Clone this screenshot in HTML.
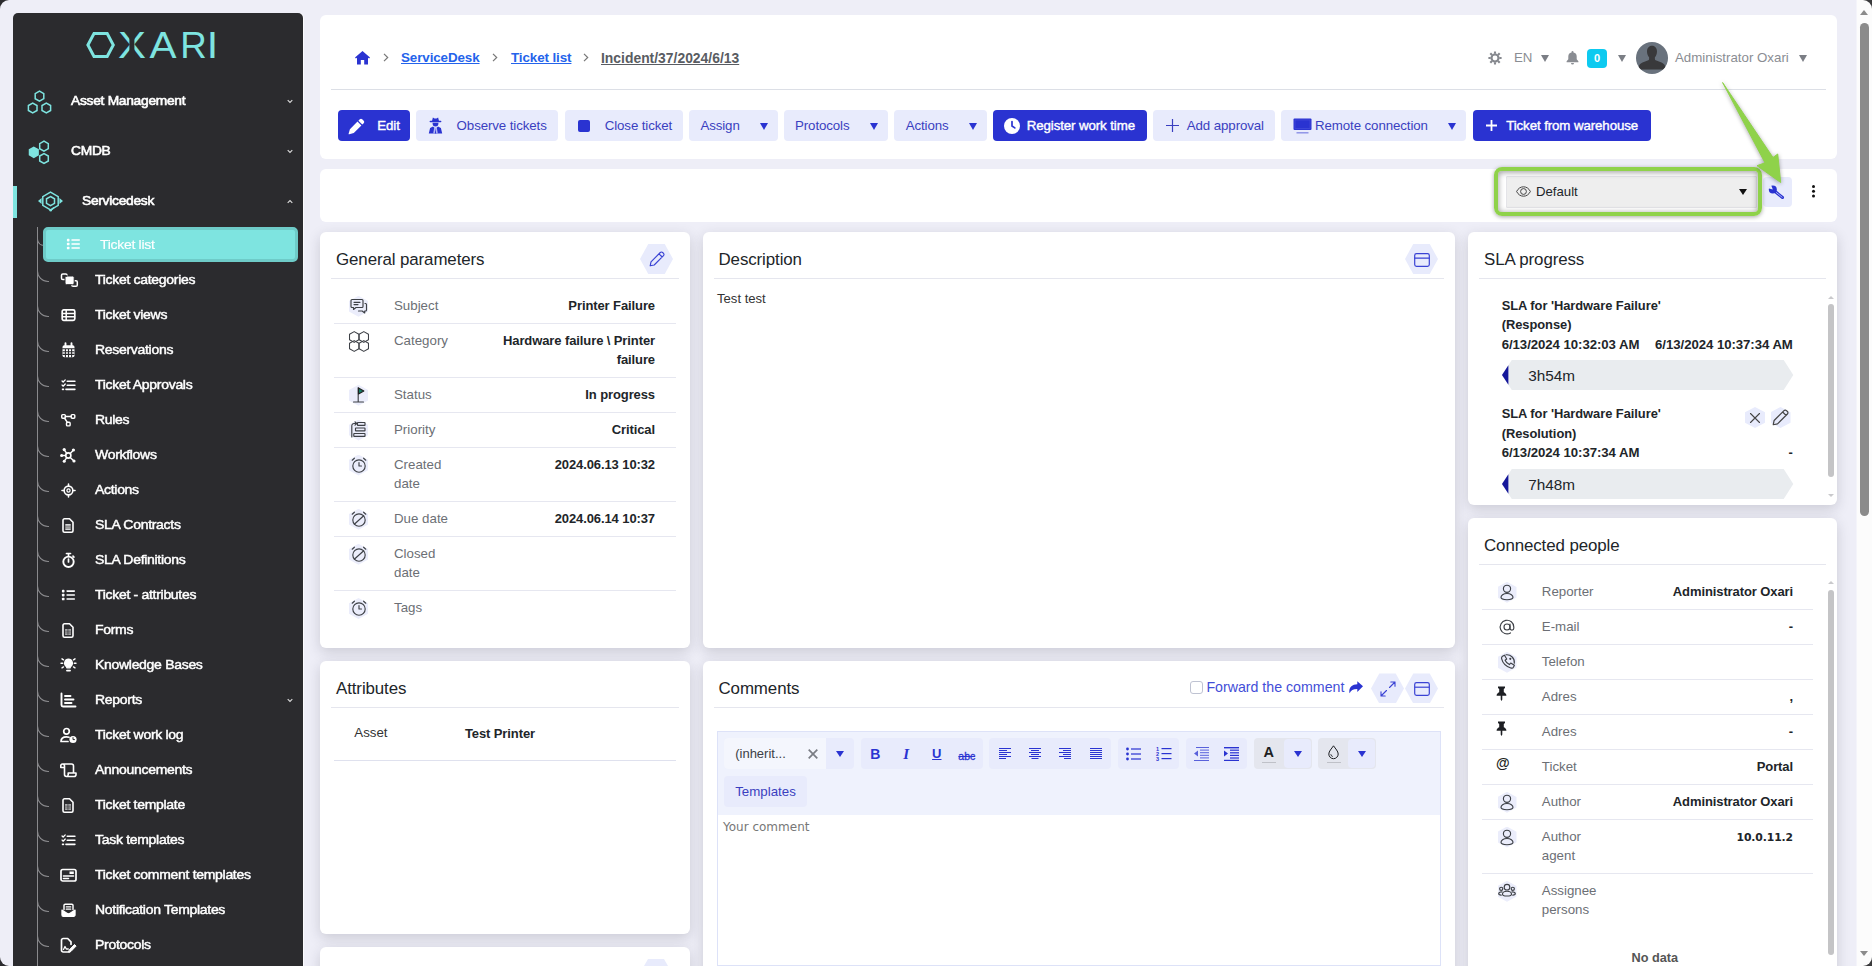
<!DOCTYPE html>
<html lang="en">
<head>
<meta charset="utf-8">
<title>Incident/37/2024/6/13</title>
<style>
*{box-sizing:border-box;margin:0;padding:0}
html,body{width:1872px;height:966px;overflow:hidden}
body{background:#eeeef7;font-family:"Liberation Sans",sans-serif;font-size:13px;color:#212529;position:relative}
.abs{position:absolute}
svg{display:block;overflow:visible}
/* window corners */
.corner{position:absolute;width:9px;height:9px;background:#2b2b2e;overflow:hidden}
.corner i{position:absolute;width:20px;height:20px;border-radius:9px;background:#eeeef7}
/* sidebar */
#side{position:absolute;left:13px;top:13px;width:290px;height:960px;background:#2b2b2e;border-radius:5px 5px 0 0;box-shadow:1px 0 0 #fbfbfd}
.mi{position:absolute;left:0;width:290px;height:20px;color:#fff;font-size:13px;line-height:20px;letter-spacing:-0.26px;-webkit-text-stroke:0.6px #fff;margin-top:1px}
.mi span{position:absolute;white-space:nowrap;transform:scaleX(1.06);transform-origin:0 50%}
.sub{position:absolute;left:0;width:290px;height:20px;color:#fff;font-size:13px;line-height:20px;letter-spacing:-0.28px;-webkit-text-stroke:0.45px #fff;margin-top:1px}
.sub span{position:absolute;left:81.500px;top:0;white-space:nowrap;transform:scaleX(1.077);transform-origin:0 50%}
.sub svg{position:absolute;left:46.700px;top:2px}
.chev,.sub svg.chev{position:absolute;left:auto;right:10px;top:8px}
.twig{position:absolute;left:24px;width:12px;height:12px;border-left:1px solid #8a8a8d;border-bottom:1px solid #8a8a8d;border-radius:0 0 0 11px}
/* cards */
.card{position:absolute;background:#fff;border-radius:6px;box-shadow:0 4px 13px rgba(40,42,55,.175)}
.ct{position:absolute;left:16px;top:18px;line-height:20px;font-size:16.900px;color:#212529;letter-spacing:-0.1px;white-space:nowrap}
.chr{position:absolute;left:12px;right:12px;top:45px;height:1px;background:#e5e6ee}
.hex{position:absolute;width:32px;height:28px;background:#e8ebfc;clip-path:polygon(25% 0,75% 0,100% 50%,75% 100%,25% 100%,0 50%)}
.hexv{position:absolute;width:19px;height:21px;background:#ebedfb;clip-path:polygon(50% 0,100% 25%,100% 75%,50% 100%,0 75%,0 25%)}
.row{position:absolute;left:14px;right:14px;border-bottom:1px solid #e3e4ee}
.lbl{position:absolute;color:#6c6f75;font-size:13.3px;line-height:19px;white-space:nowrap}
.val{position:absolute;color:#212529;font-weight:bold;font-size:13px;line-height:19px;text-align:right;white-space:nowrap;letter-spacing:-0.1px}
.bc{font-weight:bold;font-size:13.4px;line-height:20px;text-decoration:underline;white-space:nowrap;letter-spacing:-0.1px;margin-top:1px}
.tn{font-size:13.3px;line-height:20px;color:#8a8d93;white-space:nowrap;margin-top:1px}
.sb{-webkit-text-stroke:0.4px #fff}
.slab{font-weight:bold;font-size:12.900px;line-height:20px;color:#212529;white-space:nowrap;letter-spacing:-.05px}
.tb{width:20px;text-align:center;font-size:14px;line-height:20px;color:#2a33d1}
/* buttons */
.btn{position:absolute;top:110px;height:31px;border-radius:4px;font-size:13.3px;line-height:31px;white-space:nowrap;letter-spacing:-0.1px}
.bp{background:#2a33d1;color:#fff}
.bl{background:#e8ebfc;color:#3a3fc0}
.btn span{position:absolute;top:0}
.tri{position:absolute;width:0;height:0;border-left:4.5px solid transparent;border-right:4.5px solid transparent;border-top:7px solid #2a33d1}
.trig{position:absolute;width:0;height:0;border-left:4.5px solid transparent;border-right:4.5px solid transparent;border-top:7px solid #7b7e85}
</style>
</head>
<body>
<!-- window corners -->
<div class="corner" style="left:0;top:0"><i style="left:0;top:0"></i></div>
<div class="corner" style="left:0;bottom:0"><i style="left:0;bottom:0"></i></div>

<!-- SIDEBAR -->
<div id="side">
<svg class="abs" style="left:73px;top:19px" width="130" height="27" viewBox="0 0 130 27" role="img" aria-label="OXARI"><title>OXARI</title>
<polygon points="1.900,13 8,1.500 21.200,1.500 27.300,13 21.200,24.400 8,24.400" fill="none" stroke="#7ee4e0" stroke-width="3"/>
<g font-family="Liberation Sans, sans-serif" font-size="37.500" fill="#7ee4e0" text-anchor="middle"><text transform="translate(45.900,25.900) scale(1.120,1)">X</text><text transform="translate(77,25.900) scale(1.080,1)">A</text><text transform="translate(107.600,25.900) scale(.98,1)">R</text><text transform="translate(126.500,25.900) scale(1.100,1)">I</text></g><rect x="43.400" y="-1" width="5" height="29" fill="#2b2b2e"/></svg>
<div class="mi" style="top:77px"><svg class="abs" style="left:14px;top:-1.500px" width="25" height="25" viewBox="0 0 25 25" fill="none" stroke="#7ee4e0" stroke-width="1.500"><polygon points="16.8,8.7 12.5,11.2 8.2,8.7 8.2,3.7 12.5,1.2 16.8,3.7"/><polygon points="10.0,20.5 5.7,23.0 1.4,20.5 1.4,15.5 5.7,13.0 10.0,15.5"/><polygon points="23.6,20.5 19.3,23.0 15.0,20.5 15.0,15.5 19.3,13.0 23.6,15.5"/></svg><span style="left:58px">Asset Management</span><svg class="chev" width="6" height="5" viewBox="0 0 6 5" fill="none" stroke="#ddd" stroke-width="1.100"><path d="M0.700 1.200l2.300 2.300 2.300-2.300"/></svg></div>
<div class="mi" style="top:127px"><svg class="abs" style="left:15px;top:-1.500px" width="23" height="25" viewBox="0 0 23 25" fill="none" stroke="#7ee4e0" stroke-width="1.500"><polygon points="20.3,8.7 16.0,11.2 11.7,8.7 11.7,3.7 16.0,1.2 20.3,3.7"/><polygon points="20.3,21.0 16.0,23.5 11.7,21.0 11.7,16.0 16.0,13.5 20.3,16.0"/><polygon points="10.1,14.8 5.8,17.3 1.5,14.8 1.5,9.8 5.8,7.3 10.1,9.8" fill="#7ee4e0"/></svg><span style="left:58px">CMDB</span><svg class="chev" width="6" height="5" viewBox="0 0 6 5" fill="none" stroke="#ddd" stroke-width="1.100"><path d="M0.700 1.200l2.300 2.300 2.300-2.300"/></svg></div>
<div class="abs" style="left:0;top:173px;width:4px;height:32px;background:#7ee4e0"></div>
<div class="mi" style="top:177px"><svg class="abs" style="left:24.500px;top:0px" width="25" height="21" viewBox="0 0 25 21" fill="none" stroke="#7ee4e0" stroke-width="1.500"><polygon points="12.5,1.200 20.200,5.600 20.200,14.400 12.5,18.800 4.800,14.400 4.800,5.600"/><polygon points="12.5,5.500 16.500,7.800 16.500,12.300 12.5,14.600 8.500,12.300 8.500,7.800"/><path d="M3.600 7L0 10l3.600 3zM21.400 7L25 10l-3.600 3z" fill="#7ee4e0" stroke="none"/><path d="M16 16.500l-3 2.800" /><circle cx="12.700" cy="19.200" r="1.300" fill="#7ee4e0" stroke="none"/></svg><span style="left:69px">Servicedesk</span><svg class="chev" width="6" height="5" viewBox="0 0 6 5" fill="none" stroke="#ddd" stroke-width="1.100"><path d="M0.700 3.800l2.300-2.300 2.300 2.300"/></svg></div>
<div class="abs" style="left:24px;top:214px;width:1px;height:760px;background:#8a8a8d"></div>
<div class="twig" style="top:221px;width:7px"></div>
<div class="abs" style="left:30px;top:214px;width:255px;height:35px;background:#7ee4e0;border:3px solid #6ecbc8;border-radius:5px"></div>
<div class="sub" style="top:221px;-webkit-text-stroke:0.15px #fff"><svg style="left:53px;top:2px" width="14" height="14" viewBox="0 0 16 16"><g fill="#fff" stroke="none"><rect x="1" y="2" width="3" height="3" rx="1"/><rect x="1" y="6.5" width="3" height="3" rx="1"/><rect x="1" y="11" width="3" height="3" rx="1"/><rect x="6" y="2.6" width="10" height="1.8" rx=".9"/><rect x="6" y="7.1" width="10" height="1.8" rx=".9"/><rect x="6" y="11.6" width="10" height="1.8" rx=".9"/></g></svg><span style="left:87px">Ticket list</span></div>
<div class="twig" style="top:257px"></div>
<div class="sub" style="top:256px"><svg width="17" height="17" viewBox="0 0 17 17" fill="none" stroke="#fff" stroke-width="1.6" stroke-linecap="round" stroke-linejoin="round"><rect x="1.500" y="2" width="5.500" height="5.500" rx="1.300" stroke-width="1.500"/><rect x="11.800" y="8.800" width="5.500" height="5.500" rx="1.300" stroke-width="1.500"/><rect x="5" y="4" width="9.200" height="8.700" rx="1.600" fill="#fff" stroke="#2b2b2e" stroke-width="1"/></svg><span>Ticket categories</span></div>
<div class="twig" style="top:292px"></div>
<div class="sub" style="top:291px"><svg width="17" height="17" viewBox="0 0 17 17" fill="none" stroke="#fff" stroke-width="1.6" stroke-linecap="round" stroke-linejoin="round"><rect x="2.200" y="2.800" width="12.600" height="10.600" rx="1.600" stroke-width="1.700"/><path d="M2.500 6.400h12M2.500 9.800h12M6.200 3v10" stroke-width="1.500"/></svg><span>Ticket views</span></div>
<div class="twig" style="top:327px"></div>
<div class="sub" style="top:326px"><svg width="17" height="17" viewBox="0 0 17 17" fill="none" stroke="#fff" stroke-width="1.6" stroke-linecap="round" stroke-linejoin="round"><rect x="2.500" y="3.200" width="12" height="12" rx="1.8" fill="#fff" stroke="none"/><path d="M5.500 1.200v3M11.500 1.200v3" stroke-width="1.900"/><g stroke="#2b2b2e" stroke-width="1.100"><path d="M2.500 6.800h12M5.400 7v8M8.500 7v8M11.600 7v8M3 9.700h11M3 12.400h11"/></g></svg><span>Reservations</span></div>
<div class="twig" style="top:362px"></div>
<div class="sub" style="top:361px"><svg width="17" height="17" viewBox="0 0 17 17" fill="none" stroke="#fff" stroke-width="1.6" stroke-linecap="round" stroke-linejoin="round"><g transform="translate(8.500 8.500) scale(0.86) translate(-8.500 -8.500)"><path d="M1 3.200l1.300 1.300L4.700 2" stroke-width="1.500"/><path d="M1 8l1.300 1.300L4.700 6.800" stroke-width="1.500"/><path d="M7 3.500h9M7 8.300h9M5.500 13h10.500M1.500 13h1.200" stroke-width="1.800"/></g></svg><span>Ticket Approvals</span></div>
<div class="twig" style="top:397px"></div>
<div class="sub" style="top:396px"><svg width="17" height="17" viewBox="0 0 17 17" fill="none" stroke="#fff" stroke-width="1.6" stroke-linecap="round" stroke-linejoin="round"><g transform="translate(8.500 8.500) scale(0.9) translate(-8.500 -8.500)"><rect x="1" y="2" width="4" height="4" rx="1"/><rect x="11.500" y="2" width="4" height="4" rx="1"/><rect x="6.300" y="10.500" width="4" height="4" rx="1"/><path d="M5 4h6.500M4.200 6l3 4.500"/></g></svg><span>Rules</span></div>
<div class="twig" style="top:432px"></div>
<div class="sub" style="top:431px"><svg width="17" height="17" viewBox="0 0 17 17" fill="none" stroke="#fff" stroke-width="1.6" stroke-linecap="round" stroke-linejoin="round"><circle cx="8.300" cy="8.500" r="2.600"/><g fill="#fff" stroke="none"><circle cx="1.700" cy="8.500" r="1.600"/><circle cx="4.200" cy="2.600" r="1.600"/><circle cx="13.400" cy="3" r="1.600"/><circle cx="14" cy="14" r="1.600"/><circle cx="4.200" cy="14.200" r="1.500"/></g><path d="M3 8.500h2.700M4.800 3.600l2 2.800M12.600 4l-2.400 2.500M13.200 13.200l-3-2.800M4.800 13.400l2-2.700" stroke-width="1.400"/></svg><span>Workflows</span></div>
<div class="twig" style="top:467px"></div>
<div class="sub" style="top:466px"><svg width="17" height="17" viewBox="0 0 17 17" fill="none" stroke="#fff" stroke-width="1.6" stroke-linecap="round" stroke-linejoin="round"><g transform="translate(8.500 8.500) scale(0.87) translate(-8.500 -8.500)"><circle cx="8.500" cy="8.500" r="5" stroke-width="1.800"/><circle cx="8.500" cy="8.500" r="1.800" stroke-width="1.500"/><path d="M8.500 1v2.500M8.500 13.500V16M1 8.500h2.500M13.500 8.500H16" stroke-width="1.800"/></g></svg><span>Actions</span></div>
<div class="twig" style="top:502px"></div>
<div class="sub" style="top:501px"><svg width="17" height="17" viewBox="0 0 17 17" fill="none" stroke="#fff" stroke-width="1.6" stroke-linecap="round" stroke-linejoin="round"><path d="M4.500 1.800h5l3.500 3.500v8.400a1.500 1.500 0 0 1-1.500 1.500h-7A1.500 1.500 0 0 1 3 13.700V3.300a1.500 1.500 0 0 1 1.500-1.500z" /><rect x="5.300" y="7.200" width="5.400" height="5.600" fill="#fff" stroke="none"/><path d="M5.500 9.100h5M5.500 11h5" stroke="#2b2b2e" stroke-width=".9"/></svg><span>SLA Contracts</span></div>
<div class="twig" style="top:537px"></div>
<div class="sub" style="top:536px"><svg width="17" height="17" viewBox="0 0 17 17" fill="none" stroke="#fff" stroke-width="1.6" stroke-linecap="round" stroke-linejoin="round"><circle cx="8.500" cy="9.800" r="5.200" stroke-width="1.900"/><path d="M8.500 7v3M6.500 1.500h4M8.500 1.500v3M13 4.200l.9.900" stroke-width="1.700"/></svg><span>SLA Definitions</span></div>
<div class="twig" style="top:572px"></div>
<div class="sub" style="top:571px"><svg width="17" height="17" viewBox="0 0 17 17" fill="none" stroke="#fff" stroke-width="1.6" stroke-linecap="round" stroke-linejoin="round"><g transform="translate(8.500 8.500) scale(0.88) translate(-8.500 -8.500)"><g fill="#fff" stroke="none"><rect x="1" y="2" width="3" height="3" rx="1"/><rect x="1" y="6.5" width="3" height="3" rx="1"/><rect x="1" y="11" width="3" height="3" rx="1"/><rect x="6" y="2.6" width="10" height="1.8" rx=".9"/><rect x="6" y="7.1" width="10" height="1.8" rx=".9"/><rect x="6" y="11.6" width="10" height="1.8" rx=".9"/></g></g></svg><span>Ticket - attributes</span></div>
<div class="twig" style="top:607px"></div>
<div class="sub" style="top:606px"><svg width="17" height="17" viewBox="0 0 17 17" fill="none" stroke="#fff" stroke-width="1.6" stroke-linecap="round" stroke-linejoin="round"><path d="M4.500 1.800h5l3.500 3.500v8.400a1.500 1.500 0 0 1-1.500 1.500h-7A1.500 1.500 0 0 1 3 13.700V3.300a1.500 1.500 0 0 1 1.500-1.500z"/><rect x="5.300" y="7.200" width="5.400" height="5.600" fill="#fff" stroke="none"/><path d="M5.500 9.100h5M5.500 11h5M7.200 7.400v5.200M8.900 7.400v5.200" stroke="#2b2b2e" stroke-width=".8"/></svg><span>Forms</span></div>
<div class="twig" style="top:642px"></div>
<div class="sub" style="top:641px"><svg width="17" height="17" viewBox="0 0 17 17" fill="none" stroke="#fff" stroke-width="1.6" stroke-linecap="round" stroke-linejoin="round"><path d="M8.500 2.200a4 4 0 0 0-2.300 7.200c.4.400.6.900.6 1.400h3.400c0-.5.200-1 .6-1.400a4 4 0 0 0-2.300-7.200z" fill="#fff" stroke-width="1.200"/><path d="M7 13.600h3" stroke-width="1.900"/><path d="M1 6.300h1.700M14.300 6.300H16M2 1.800l1.500 1M15 1.800l-1.500 1M2 10.800l1.500-.9M15 10.800l-1.500-.9" stroke-width="1.400"/></svg><span>Knowledge Bases</span></div>
<div class="twig" style="top:677px"></div>
<div class="sub" style="top:676px"><svg width="17" height="17" viewBox="0 0 17 17" fill="none" stroke="#fff" stroke-width="1.6" stroke-linecap="round" stroke-linejoin="round"><path d="M1.500 1.500v11.500a1.500 1.500 0 0 0 1.500 1.500h12.500" stroke-width="1.900"/><path d="M5 4h5.500M5 7.500h8.500M5 11h6.500" stroke-width="1.900"/></svg><span>Reports</span><svg class="chev" width="6" height="5" viewBox="0 0 6 5" fill="none" stroke="#ddd" stroke-width="1.100"><path d="M0.700 1.200l2.300 2.300 2.300-2.300"/></svg></div>
<div class="twig" style="top:712px"></div>
<div class="sub" style="top:711px"><svg width="17" height="17" viewBox="0 0 17 17" fill="none" stroke="#fff" stroke-width="1.6" stroke-linecap="round" stroke-linejoin="round"><circle cx="6.500" cy="4.300" r="2.800" stroke-width="1.700"/><path d="M1 14.500c0-3 2.300-4.700 5.500-4.700 1 0 1.800.2 2.500.500M1 14.500h7" stroke-width="1.700"/><circle cx="13" cy="12.500" r="3.600" fill="#fff" stroke="none"/><path d="M13 10.600v2h1.500" stroke="#2b2b2e" stroke-width="1"/></svg><span>Ticket work log</span></div>
<div class="twig" style="top:747px"></div>
<div class="sub" style="top:746px"><svg width="17" height="17" viewBox="0 0 17 17" fill="none" stroke="#fff" stroke-width="1.6" stroke-linecap="round" stroke-linejoin="round"><path d="M4.500 8V4a2 2 0 0 0-2-2 1.800 1.800 0 0 0-1.700 2.300v1.200h3.200M2.500 2h9a2 2 0 0 1 2 2v6.500M6.500 14.500h7.700a1.800 1.800 0 0 0 1.800-2v-1.500H8.200v1.800a1.800 1.800 0 0 1-1.800 1.700 1.900 1.900 0 0 1-1.900-1.900V7" stroke-width="1.600"/></svg><span>Announcements</span></div>
<div class="twig" style="top:782px"></div>
<div class="sub" style="top:781px"><svg width="17" height="17" viewBox="0 0 17 17" fill="none" stroke="#fff" stroke-width="1.6" stroke-linecap="round" stroke-linejoin="round"><path d="M4.500 1.800h5l3.500 3.500v8.400a1.500 1.500 0 0 1-1.500 1.500h-7A1.500 1.500 0 0 1 3 13.700V3.300a1.500 1.500 0 0 1 1.500-1.500z"/><rect x="5.300" y="7.200" width="5.400" height="5.600" fill="#fff" stroke="none"/><path d="M5.500 9.100h5M5.500 11h5M7.200 7.400v5.200M8.900 7.400v5.200" stroke="#2b2b2e" stroke-width=".8"/></svg><span>Ticket template</span></div>
<div class="twig" style="top:817px"></div>
<div class="sub" style="top:816px"><svg width="17" height="17" viewBox="0 0 17 17" fill="none" stroke="#fff" stroke-width="1.6" stroke-linecap="round" stroke-linejoin="round"><g transform="translate(8.500 8.500) scale(0.86) translate(-8.500 -8.500)"><path d="M1 3.200l1.300 1.300L4.700 2" stroke-width="1.500"/><path d="M1 8l1.300 1.300L4.700 6.800" stroke-width="1.500"/><path d="M7 3.500h9M7 8.300h9M5.500 13h10.500M1.500 13h1.200" stroke-width="1.800"/></g></svg><span>Task templates</span></div>
<div class="twig" style="top:852px"></div>
<div class="sub" style="top:851px"><svg width="17" height="17" viewBox="0 0 17 17" fill="none" stroke="#fff" stroke-width="1.6" stroke-linecap="round" stroke-linejoin="round"><rect x="1" y="2.500" width="15" height="11.500" rx="1.800" stroke-width="1.700"/><path d="M3.500 9h10M3.500 11.500h5" stroke-width="1.600"/><rect x="9.500" y="4.500" width="4.300" height="2.500" fill="#fff" stroke="none"/></svg><span>Ticket comment templates</span></div>
<div class="twig" style="top:887px"></div>
<div class="sub" style="top:886px"><svg width="17" height="17" viewBox="0 0 17 17" fill="none" stroke="#fff" stroke-width="1.6" stroke-linecap="round" stroke-linejoin="round"><g transform="translate(8.500 8.500) scale(0.9) translate(-8.500 -8.500)"><path d="M1.200 8v5.500a1.500 1.500 0 0 0 1.500 1.500h11.600a1.500 1.500 0 0 0 1.500-1.500V8l-5.500 3.600a3.200 3.200 0 0 1-3.600 0z" fill="#fff" stroke-width="1.300"/><path d="M3.500 7.500V2.800A1.300 1.300 0 0 1 4.800 1.500h7.400a1.300 1.300 0 0 1 1.300 1.300v4.700" stroke-width="1.600"/><path d="M6 4.500h5M6 7h5" stroke-width="1.300"/></g></svg><span>Notification Templates</span></div>
<div class="twig" style="top:922px"></div>
<div class="sub" style="top:921px"><svg width="17" height="17" viewBox="0 0 17 17" fill="none" stroke="#fff" stroke-width="1.6" stroke-linecap="round" stroke-linejoin="round"><path d="M9.500 15H3.200A1.700 1.700 0 0 1 1.500 13.300V3.200A1.700 1.700 0 0 1 3.200 1.500h4.500l3.300 3.300v2.500" stroke-width="1.700"/><path d="M3.500 12.500l1.500-3 1.300 2.500h2" stroke-width="1.300"/><path d="M9.500 12.700l5-5.200 1.600 1.600-5 5.200-2.300.6z" fill="#fff" stroke-width="1"/></svg><span>Protocols</span></div>
</div>

<!-- HEADER CARD -->
<div class="card" id="head" style="left:320px;top:15px;width:1517px;height:144px;box-shadow:none">
<!-- breadcrumb -->
<svg class="abs" style="left:34.500px;top:36px" width="15" height="13.500" viewBox="0 0 15 13.500"><path d="M7.500 0L0 6.600l.9 1 1.100-.9V13.500h3.800V9h3.400v4.500H13V6.700l1.100.9.900-1z" fill="#2a33d1"/></svg>
<svg class="abs bc-sep" style="left:63px;top:38px" width="6" height="9" viewBox="0 0 6 9" fill="none" stroke="#777" stroke-width="1.200"><path d="M1 .8l3.700 3.700L1 8.200"/></svg>
<a class="abs bc" style="left:81px;top:32px;color:#2463eb">ServiceDesk</a>
<svg class="abs bc-sep" style="left:172px;top:38px" width="6" height="9" viewBox="0 0 6 9" fill="none" stroke="#777" stroke-width="1.200"><path d="M1 .8l3.700 3.700L1 8.200"/></svg>
<a class="abs bc" style="left:191px;top:32px;color:#2463eb">Ticket list</a>
<svg class="abs bc-sep" style="left:262.500px;top:38px" width="6" height="9" viewBox="0 0 6 9" fill="none" stroke="#777" stroke-width="1.200"><path d="M1 .8l3.700 3.700L1 8.200"/></svg>
<a class="abs bc" style="left:281px;top:32px;color:#595c62;font-size:13.900px;letter-spacing:0">Incident/37/2024/6/13</a>
<!-- right tools -->
<svg class="abs" style="left:1167.500px;top:36px" width="14" height="14" viewBox="0 0 14 14" fill="none" stroke="#85888e"><circle cx="7" cy="7" r="3.500" stroke-width="2.100"/><path d="M7 .4v2.300M7 11.300v2.300M.4 7h2.300M11.300 7h2.300M2.300 2.300l1.700 1.700M10 10l1.700 1.700M2.300 11.700L4 10M10 4l1.700-1.700" stroke-width="2.100"/></svg>
<div class="abs tn" style="left:1194px;top:32px">EN</div>
<div class="trig" style="left:1221px;top:40px"></div>
<svg class="abs" style="left:1245.500px;top:36px" width="13" height="13.500" viewBox="0 0 13 13.500"><path d="M6.500 0a1 1 0 0 0-1 1v.5A4 4 0 0 0 2.300 5.400v2.800L.6 10.300v.9h11.800v-.9l-1.700-2.100V5.400A4 4 0 0 0 7.500 1.500V1a1 1 0 0 0-1-1zM5 12a1.500 1.500 0 0 0 3 0z" fill="#8a8d93"/></svg>
<div class="abs" style="left:1267px;top:34px;width:20px;height:19px;border-radius:4px;background:#0dcaf0;color:#fff;font-weight:bold;font-size:11px;line-height:19px;text-align:center">0</div>
<div class="trig" style="left:1297.500px;top:40px"></div>
<svg class="abs" style="left:1316px;top:27px" width="32" height="32" viewBox="0 0 32 32"><defs><clipPath id="avc"><circle cx="16" cy="16" r="16"/></clipPath></defs><circle cx="16" cy="16" r="16" fill="#69727d"/><g clip-path="url(#avc)"><path d="M16 3.800c3.200 0 5 2.400 5 5.800 0 2.400-.9 4.500-2.100 5.700v1.700c0 .7.500 1.200 1.400 1.600l5.200 2c1.900.8 3 1.900 3.500 3.400l.5 3.400H2.500l.5-3.400c.5-1.500 1.600-2.600 3.500-3.400l5.200-2c.9-.4 1.400-.9 1.400-1.600v-1.700C11.900 14.100 11 12 11 9.600c0-3.400 1.800-5.800 5-5.800z" fill="#39393b"/></g></svg>
<div class="abs tn" style="left:1355px;top:32px">Administrator Oxari</div>
<div class="trig" style="left:1479px;top:40px"></div>
<div class="abs" style="left:11px;top:74px;width:1495px;height:1px;background:#dcdfe6"></div>
<div class="btn bp" style="left:18px;top:95px;width:72px"><svg class="abs" style="left:10px;top:7.500px" width="17" height="17" viewBox="0 0 17 17"><path d="M11.800 1.300a1.700 1.700 0 0 1 2.400 0l1.500 1.500a1.700 1.700 0 0 1 0 2.400l-1.400 1.400-3.900-3.900zM9.500 3.600l3.900 3.900-7.600 7.600-4.600 1.200a.5.500 0 0 1-.6-.6l1.300-4.500z" fill="#fff"/></svg><span class="sb" style="left:39.300px">Edit</span></div>
<div class="btn bl" style="left:96px;top:95px;width:142px"><svg class="abs" style="left:11.700px;top:7.300px" width="15" height="16.500" viewBox="0 0 15 16.500" fill="#2a33d1"><path d="M4 4L4.900.6 6.500 1.400h2L10.100.6 11 4z"/><rect x="1.600" y="3.800" width="11.800" height="1.400" rx=".7"/><path d="M4.600 5.800h5.800v.8A2.900 2.900 0 0 1 7.500 9.500 2.900 2.900 0 0 1 4.600 6.600z"/><path d="M.8 16.500l1.300-5.600L5 9.400l2.500 2.300L10 9.400l2.900 1.500 1.300 5.600z"/><path d="M6.200 10.600h2.600l1 5.900H5.200z" fill="#b4b9f4"/><path d="M7.500 11.500l.7 5H6.800z"/></svg><span style="left:40.600px">Observe tickets</span></div>
<div class="btn bl" style="left:245px;top:95px;width:118px"><i class="abs" style="left:12.800px;top:9.700px;width:12px;height:12px;border-radius:2px;background:#2a33d1"></i><span style="left:39.700px">Close ticket</span></div>
<div class="btn bl" style="left:369px;top:95px;width:89px"><span style="left:11.400px">Assign</span><i class="tri" style="left:70.5px;top:12.500px"></i></div>
<div class="btn bl" style="left:464px;top:95px;width:104px"><span style="left:11px">Protocols</span><i class="tri" style="left:85.5px;top:12.500px"></i></div>
<div class="btn bl" style="left:574px;top:95px;width:93px"><span style="left:11.700px">Actions</span><i class="tri" style="left:74.7px;top:12.500px"></i></div>
<div class="btn bp" style="left:673px;top:95px;width:154px"><svg class="abs" style="left:11px;top:7.500px" width="16" height="16" viewBox="0 0 16 16"><circle cx="8" cy="8" r="8" fill="#fff"/><path d="M8 3.500V8l2.800 1.900" fill="none" stroke="#2a33d1" stroke-width="1.700" stroke-linecap="round"/></svg><span class="sb" style="left:33.700px">Register work time</span></div>
<div class="btn bl" style="left:833px;top:95px;width:122px"><svg class="abs" style="left:12.500px;top:9px" width="13" height="13" viewBox="0 0 13 13" stroke="#3a3fc0" stroke-width="1.200"><path d="M6.500 0v13M0 6.500h13"/></svg><span style="left:33.800px">Add approval</span></div>
<div class="btn bl" style="left:961px;top:95px;width:185px"><svg class="abs" style="left:11.500px;top:7.500px" width="19" height="16" viewBox="0 0 19 16"><rect x="0.500" y="0.500" width="18" height="11.500" rx="1" fill="#2a33d1"/><rect x="2" y="2" width="15" height="8.500" fill="#2a33d1" stroke="#4a52dc" stroke-width=".6"/><path d="M3.500 14.800h12" stroke="#8a8fe6" stroke-width="1.400"/></svg><span style="left:34px">Remote connection</span><i class="tri" style="left:167px;top:12.500px"></i></div>
<div class="btn bp" style="left:1153px;top:95px;width:178px"><svg class="abs" style="left:12.500px;top:10px" width="11" height="11" viewBox="0 0 11 11" stroke="#fff" stroke-width="1.800"><path d="M5.500 0v11M0 5.500h11"/></svg><span class="sb" style="left:33.200px">Ticket from warehouse</span></div>

</div>

<!-- VIEW CARD -->
<div class="card" id="view" style="left:320px;top:169px;width:1517px;height:53px;box-shadow:none">
<div class="abs" style="left:1186px;top:7px;width:251px;height:32px;background:#eeeeee;border:1px solid #e4e4e8;border-radius:1px"></div>
<svg class="abs" style="left:1196px;top:17px" width="15" height="11" viewBox="0 0 15 11" fill="none" stroke="#444" stroke-width="1"><path d="M.6 5.500C2.200 2.300 4.700.8 7.500.8s5.300 1.500 6.900 4.700c-1.600 3.200-4.100 4.700-6.900 4.700S2.200 8.700.6 5.500z"/><circle cx="7.500" cy="5.500" r="2.900"/></svg>
<div class="abs" style="left:1216px;top:13px;font-size:13.200px;line-height:20px;color:#212529">Default</div>
<i class="tri" style="left:1418.500px;top:20px;border-top-color:#111;border-left-width:4.200px;border-right-width:4.200px;border-top-width:6px"></i>
<div class="abs" style="left:1443px;top:8px;width:29px;height:29.500px;border-radius:4px;background:#e8ebfc"></div>
<svg class="abs" style="left:1447px;top:14px" width="20" height="18" viewBox="0 0 20 18"><circle cx="5.800" cy="6.500" r="4" fill="#2a33d1"/><path d="M5.800 6.500L1 5.200 3.800 1.200z" fill="#e8ebfc"/><path d="M7.500 8l8 6.500" stroke="#2a33d1" stroke-width="3" stroke-linecap="round"/><path d="M9.300 9.500l5.800 4.700" stroke="#b9bef5" stroke-width=".9" stroke-linecap="round"/></svg>
<div class="abs" style="left:1491.500px;top:15.700px;width:3.300px;height:3.300px;border-radius:2px;background:#111;box-shadow:0 4.700px 0 #111,0 9.400px 0 #111"></div>

</div>

<!-- GENERAL -->
<div class="card" id="gen" style="left:320px;top:232px;width:370px;height:416px">
<div class="ct">General parameters</div>
<i class="hex" style="left:320.0px;top:12.0px;width:33px;height:30px"></i><svg class="abs" style="left:328.5px;top:19.0px" width="16" height="16" viewBox="0 0 16 16" ><path d="M11.300 1.500a1.600 1.600 0 0 1 2.300 0l.9.900a1.600 1.600 0 0 1 0 2.300L5.200 14 1.200 14.800 2 10.800zM10 2.800l3.200 3.200" fill="none" stroke="#3a43d4" stroke-width="1.150" stroke-linejoin="round"/></svg>
<div class="chr" style="top:46px;left:11px;right:11px"></div>
<div class="abs" style="left:14px;top:91px;width:342px;height:1px;background:#e6e7f0"></div>
<div class="abs" style="left:14px;top:145px;width:342px;height:1px;background:#e6e7f0"></div>
<div class="abs" style="left:14px;top:180px;width:342px;height:1px;background:#e6e7f0"></div>
<div class="abs" style="left:14px;top:215px;width:342px;height:1px;background:#e6e7f0"></div>
<div class="abs" style="left:14px;top:269px;width:342px;height:1px;background:#e6e7f0"></div>
<div class="abs" style="left:14px;top:304px;width:342px;height:1px;background:#e6e7f0"></div>
<div class="abs" style="left:14px;top:358px;width:342px;height:1px;background:#e6e7f0"></div>
<i class="hexv" style="left:29.0px;top:63.7px"></i><svg class="abs" style="left:29.5px;top:65.2px" width="18" height="18" viewBox="0 0 18 18" fill="none" stroke="#3d4046" stroke-width="1.15" stroke-linecap="round" stroke-linejoin="round"><path d="M2 2.500h10a1 1 0 0 1 1 1v6a1 1 0 0 1-1 1H6l-2.500 2v-2H2a1 1 0 0 1-1-1v-6a1 1 0 0 1 1-1z"/><path d="M4 5.300h6M4 7.600h4"/><path d="M15 6.500h.5a1 1 0 0 1 1 1v5.500a1 1 0 0 1-1 1h-.8v2l-2.500-2H8.500"/></svg>
<div class="lbl" style="left:74px;top:64.2px">Subject</div>
<div class="val" style="right:35px;top:64.2px">Printer Failure</div>
<svg class="abs" style="left:28.8px;top:98.6px" width="20" height="21" viewBox="0 0 20 21" fill="none" stroke="#3d4046" stroke-width="1.05" stroke-linecap="round" stroke-linejoin="round"><polygon points="5.20,0.60 9.88,3.30 9.88,8.70 5.20,11.40 0.52,8.70 0.52,3.30"/><polygon points="14.80,0.60 19.48,3.30 19.48,8.70 14.80,11.40 10.12,8.70 10.12,3.30"/><polygon points="5.20,9.60 9.88,12.30 9.88,17.70 5.20,20.40 0.52,17.70 0.52,12.30"/><polygon points="14.80,9.60 19.48,12.30 19.48,17.70 14.80,20.40 10.12,17.70 10.12,12.30"/></svg>
<div class="lbl" style="left:74px;top:99.3px">Category</div>
<div class="val" style="right:35px;top:99.3px">Hardware failure \ Printer<br>failure</div>
<i class="hexv" style="left:29.0px;top:152.7px"></i><svg class="abs" style="left:29.5px;top:154.2px" width="18" height="18" viewBox="0 0 18 18" fill="none" stroke="#3d4046" stroke-width="1.15" stroke-linecap="round" stroke-linejoin="round"><path d="M8.200 1.500v14M3.500 16h10" /><path d="M8.500 2l5.300 3-5.300 3z" fill="#14806a" stroke="#222"/></svg>
<div class="lbl" style="left:74px;top:153.2px">Status</div>
<div class="val" style="right:35px;top:153.2px">In progress</div>
<i class="hexv" style="left:29.0px;top:187.6px"></i><svg class="abs" style="left:29.5px;top:189.1px" width="18" height="18" viewBox="0 0 18 18" fill="none" stroke="#3d4046" stroke-width="1.15" stroke-linecap="round" stroke-linejoin="round"><path d="M6.500 2.500H4a2.200 2.200 0 0 0-2.200 2.200V16"/><path d="M5 .8l1.800 1.700L5 4.200" /><rect x="7.500" y="1.500" width="7.500" height="2.800" rx=".4"/><rect x="5.500" y="7" width="9.500" height="2.800" rx=".4"/><rect x="3.800" y="12.500" width="11.200" height="2.800" rx=".4"/></svg>
<div class="lbl" style="left:74px;top:188.1px">Priority</div>
<div class="val" style="right:35px;top:188.1px">Critical</div>
<i class="hexv" style="left:29.0px;top:222.6px"></i><svg class="abs" style="left:29.5px;top:224.1px" width="18" height="18" viewBox="0 0 18 18" fill="none" stroke="#3d4046" stroke-width="1.15" stroke-linecap="round" stroke-linejoin="round"><circle cx="9" cy="10" r="6.200"/><path d="M9 6.500V10h2.500M2.200 4.200l2.200-2M15.800 4.200l-2.200-2"/></svg>
<div class="lbl" style="left:74px;top:223.1px">Created<br>date</div>
<div class="val" style="right:35px;top:223.1px">2024.06.13 10:32</div>
<i class="hexv" style="left:29.0px;top:276.8px"></i><svg class="abs" style="left:29.5px;top:278.3px" width="18" height="18" viewBox="0 0 18 18" fill="none" stroke="#3d4046" stroke-width="1.15" stroke-linecap="round" stroke-linejoin="round"><circle cx="9" cy="10" r="6.200"/><path d="M4.300 14.200l9.400-8.400M2.200 4.200l2.200-2M15.800 4.200l-2.200-2"/></svg>
<div class="lbl" style="left:74px;top:277.3px">Due date</div>
<div class="val" style="right:35px;top:277.3px">2024.06.14 10:37</div>
<i class="hexv" style="left:29.0px;top:311.7px"></i><svg class="abs" style="left:29.5px;top:313.2px" width="18" height="18" viewBox="0 0 18 18" fill="none" stroke="#3d4046" stroke-width="1.15" stroke-linecap="round" stroke-linejoin="round"><circle cx="9" cy="10" r="6.200"/><path d="M4.300 14.200l9.400-8.400M2.200 4.200l2.200-2M15.800 4.200l-2.200-2"/></svg>
<div class="lbl" style="left:74px;top:312.2px">Closed<br>date</div>
<i class="hexv" style="left:29.0px;top:365.9px"></i><svg class="abs" style="left:29.5px;top:367.4px" width="18" height="18" viewBox="0 0 18 18" fill="none" stroke="#3d4046" stroke-width="1.15" stroke-linecap="round" stroke-linejoin="round"><circle cx="9" cy="10" r="6.200"/><path d="M9 6.500V10h2.500M2.200 4.200l2.200-2M15.800 4.200l-2.200-2"/></svg>
<div class="lbl" style="left:74px;top:366.4px">Tags</div>

</div>

<!-- DESCRIPTION -->
<div class="card" id="desc" style="left:703px;top:232px;width:752px;height:416px">
<div class="ct" style="left:15.500px">Description</div>
<i class="hex" style="left:702.0px;top:12.0px;width:33px;height:30px"></i><svg class="abs" style="left:710.5px;top:20.5px" width="16" height="14" viewBox="0 0 16 14" fill="none" stroke="#3a43d4" stroke-width="1.2" stroke-linecap="round" stroke-linejoin="round"><rect x=".7" y=".7" width="14.600" height="12.600" rx="1.800"/><path d="M.7 5.200h14.600"/></svg>
<div class="chr" style="top:46px;left:11px;right:11px"></div>
<div class="abs" style="left:14px;top:57px;font-size:13.100px;line-height:20px;color:#333">Test test</div>

</div>

<!-- SLA -->
<div class="card" id="sla" style="left:1468px;top:232px;width:369px;height:273px">
<div class="ct">SLA progress</div>
<div class="chr" style="top:46px;left:11px;right:11px"></div>
<div class="abs slab" style="left:33.7px;top:63.7px">SLA for 'Hardware Failure'</div>
<div class="abs slab" style="left:33.7px;top:82.7px">(Response)</div>
<div class="abs slab" style="font-size:13.200px;left:33.7px;top:102.7px">6/13/2024 10:32:03 AM</div>
<div class="abs slab" style="font-size:13.200px;right:44.2px;top:102.7px">6/13/2024 10:37:34 AM</div>
<svg class="abs" style="left:33.5px;top:128.0px" width="292" height="30" viewBox="0 0 292 30" ><polygon points="0,15 9.800,0 281.700,0 291.300,15 281.700,30 9.800,30" fill="#e9ecef"/><polygon points="0,15 6.400,5.200 6.400,24.800" fill="#15179a"/></svg><div class="abs" style="left:60.3px;top:133.8px;font-size:15.300px;line-height:20px;color:#212529">3h54m</div>
<div class="abs slab" style="left:33.7px;top:171.6px">SLA for 'Hardware Failure'</div>
<div class="abs slab" style="left:33.7px;top:191.6px">(Resolution)</div>
<div class="abs slab" style="font-size:13.200px;left:33.7px;top:210.9px">6/13/2024 10:37:34 AM</div>
<div class="abs slab" style="right:44.2px;top:210.9px">-</div>
<svg class="abs" style="left:33.5px;top:237.0px" width="292" height="30" viewBox="0 0 292 30" ><polygon points="0,15 9.800,0 281.700,0 291.300,15 281.700,30 9.800,30" fill="#e9ecef"/><polygon points="0,15 6.400,5.200 6.400,24.800" fill="#15179a"/></svg><div class="abs" style="left:60.3px;top:242.8px;font-size:15.300px;line-height:20px;color:#212529">7h48m</div>
<i class="hexv" style="left:277.0px;top:175.0px;width:20px;height:21px;background:#e8ebfc"></i><svg class="abs" style="left:282.0px;top:180.5px" width="10" height="10" viewBox="0 0 10 10" fill="none" stroke="#444" stroke-width="1.1" stroke-linecap="round" stroke-linejoin="round"><path d="M.5.500l9 9M9.500.500l-9 9"/></svg>
<i class="hexv" style="left:302.5px;top:175.0px;width:20px;height:21px;background:#e8ebfc"></i><svg class="abs" style="left:304.0px;top:176.8px" width="17" height="17" viewBox="0 0 16 16" ><path d="M11.300 1.500a1.600 1.600 0 0 1 2.300 0l.9.900a1.600 1.600 0 0 1 0 2.300L5.200 14 1.200 14.800 2 10.800zM10 2.800l3.200 3.200" fill="none" stroke="#444" stroke-width="1.150" stroke-linejoin="round"/></svg>
<i class="abs" style="left:360.2px;top:72px;width:6px;height:173px;border-radius:3px;background:#c4c4c6"></i>
<i class="trig" style="left:360.2px;top:63.5px;border-width:0 3px 3.500px 3px;border-style:solid;border-color:transparent transparent #c9c9cc transparent"></i>
<i class="trig" style="left:360.2px;top:261.5px;border-width:3.500px 3px 0 3px;border-style:solid;border-color:#c9c9cc transparent transparent transparent"></i>

</div>

<!-- ATTRIBUTES -->
<div class="card" id="attr" style="left:320px;top:661px;width:370px;height:273px">
<div class="ct">Attributes</div>
<div class="chr" style="top:46px;left:11px;right:11px"></div>
<div class="abs" style="left:34.3px;top:61.5px;font-size:13.300px;line-height:20px;color:#333">Asset</div>
<div class="abs" style="left:144.9px;top:63.4px;font-size:13px;line-height:20px;font-weight:bold;color:#212529;letter-spacing:-.1px">Test Printer</div>
<div class="abs" style="left:14px;top:99px;width:342px;height:1px;background:#dfe1ee"></div>

</div>

<!-- NEXT CARD -->
<div class="card" id="next" style="left:320px;top:947px;width:370px;height:60px">
<div class="hex" style="left:320px;top:12px"></div>
</div>

<!-- COMMENTS -->
<div class="card" id="comm" style="left:703px;top:661px;width:752px;height:330px">
<div class="ct" style="left:15.500px">Comments</div>
<i class="abs" style="left:487.3px;top:20.3px;width:12.500px;height:12.500px;border:1px solid #bfc3d2;border-radius:3px;background:#fff"></i>
<div class="abs" style="left:503.4px;top:16.4px;font-size:14.200px;line-height:20px;color:#434ed8;white-space:nowrap">Forward the comment</div>
<svg class="abs" style="left:646px;top:20px" width="14" height="12" viewBox="0 0 14 12"><path d="M14 5.200L8.300.3v2.900C3.300 3.400.3 6 .3 10.500c0 .6.100 1.200.3 1.700C1.700 9.500 4 8 8.300 8v2.900z" fill="#2a33d1"/></svg>
<i class="hex" style="left:668px;top:12.4px;width:33px;height:30px"></i>
<svg class="abs" style="left:676.5px;top:19.5px" width="16" height="16" viewBox="0 0 16 16" fill="none" stroke="#3a43d4" stroke-width="1.100" stroke-linecap="round" stroke-linejoin="round"><path d="M9.500 6.500l5.500-5.500M10.800 1H15v4.200M6.500 9.500L1 15M5.200 15H1v-4.200"/></svg>
<i class="hex" style="left:702px;top:12.4px;width:33px;height:30px"></i>
<svg class="abs" style="left:710.5px;top:20.5px" width="16" height="14" viewBox="0 0 16 14" fill="none" stroke="#3a43d4" stroke-width="1.200"><rect x=".7" y=".7" width="14.600" height="12.600" rx="1.800"/><path d="M.7 5.200h14.600"/></svg>
<div class="chr" style="top:46px;left:11px;right:11px"></div>
<div class="abs" style="left:14px;top:70px;width:724px;height:235px;border:1px solid #dde2f8;background:#fff"></div>
<div class="abs" style="left:15px;top:71px;width:722px;height:82.500px;background:#eff2fd"></div>
<i class="abs" style="left:21.2px;top:77.2px;width:129.9px;height:30.4px;background:#e8ebfc;border-radius:4px"></i>
<i class="abs" style="left:21.2px;top:77.2px;width:101.9px;height:30.4px;background:#f4f6fd;border-radius:4px 0 0 4px"></i>
<div class="abs" style="left:32.2px;top:83px;font-size:13px;line-height:20px;color:#3c3f46;white-space:nowrap">(inherit...</div>
<svg class="abs" style="left:105px;top:88px" width="10" height="10" viewBox="0 0 10 10" stroke="#7a7d84" stroke-width="1.700"><path d="M.7.700l8.600 8.600M9.300.700L.7 9.300"/></svg>
<i class="tri" style="left:132.8px;top:90.3px;border-left-width:4.200px;border-right-width:4.200px;border-top-width:6.500px"></i>
<i class="abs" style="left:158px;top:77.2px;width:122px;height:30.4px;background:#e8ebfc;border-radius:4px"></i>
<div class="abs tb" style="left:162.4px;top:83px;font-weight:bold">B</div>
<div class="abs tb" style="left:193.1px;top:83px;font-family:'Liberation Serif',serif;font-style:italic;font-weight:bold;font-size:15px">I</div>
<div class="abs tb" style="left:223.8px;top:82.5px;font-weight:bold;text-decoration:underline;font-size:13px">U</div>
<div class="abs tb" style="left:251.8px;top:84.5px;width:24px;font-size:10.500px;text-decoration:line-through;-webkit-text-stroke:.3px #2a33d1">abc</div>
<i class="abs" style="left:286.3px;top:77.2px;width:121.6px;height:30.4px;background:#e8ebfc;border-radius:4px"></i>
<svg class="abs" style="left:295.6px;top:87px" width="12" height="11" viewBox="0 0 12 11" fill="#2a33d1"><rect x="0" y="0" width="12" height="1" /><rect x="0" y="2" width="8" height="1" /><rect x="0" y="4" width="12" height="1" /><rect x="0" y="6" width="8" height="1" /><rect x="0" y="8" width="12" height="1" /><rect x="0" y="10" width="7" height="1" /></svg>
<svg class="abs" style="left:325.6px;top:87px" width="12" height="11" viewBox="0 0 12 11" fill="#2a33d1"><rect x="0.0" y="0" width="12" height="1" /><rect x="2.0" y="2" width="8" height="1" /><rect x="0.0" y="4" width="12" height="1" /><rect x="2.0" y="6" width="8" height="1" /><rect x="0.0" y="8" width="12" height="1" /><rect x="2.5" y="10" width="7" height="1" /></svg>
<svg class="abs" style="left:355.6px;top:87px" width="12" height="11" viewBox="0 0 12 11" fill="#2a33d1"><rect x="0" y="0" width="12" height="1" /><rect x="4" y="2" width="8" height="1" /><rect x="0" y="4" width="12" height="1" /><rect x="4" y="6" width="8" height="1" /><rect x="0" y="8" width="12" height="1" /><rect x="5" y="10" width="7" height="1" /></svg>
<svg class="abs" style="left:386.8px;top:87px" width="12" height="11" viewBox="0 0 12 11" fill="#2a33d1"><rect x="0" y="0" width="12" height="1" /><rect x="0" y="2" width="12" height="1" /><rect x="0" y="4" width="12" height="1" /><rect x="0" y="6" width="12" height="1" /><rect x="0" y="8" width="12" height="1" /><rect x="0" y="10" width="12" height="1" /></svg>
<i class="abs" style="left:415px;top:77.2px;width:60.9px;height:30.4px;background:#e8ebfc;border-radius:4px"></i>
<svg class="abs" style="left:422.5px;top:85.5px" width="15" height="14" viewBox="0 0 15 14" fill="#2a33d1"><circle cx="1.500" cy="2" r="1.400"/><circle cx="1.500" cy="7" r="1.400"/><circle cx="1.500" cy="12" r="1.400"/><rect x="5" y="1.400" width="10" height="1.200"/><rect x="5" y="6.400" width="10" height="1.200"/><rect x="5" y="11.400" width="10" height="1.200"/></svg>
<svg class="abs" style="left:453px;top:85px" width="16" height="15" viewBox="0 0 16 15" fill="#2a33d1"><text x="0" y="4.500" font-size="5.500" font-weight="bold" font-family="Liberation Sans,sans-serif">1</text><text x="0" y="9.800" font-size="5.500" font-weight="bold" font-family="Liberation Sans,sans-serif">2</text><text x="0" y="15" font-size="5.500" font-weight="bold" font-family="Liberation Sans,sans-serif">3</text><rect x="5.500" y="2" width="10" height="1.200"/><rect x="5.500" y="7" width="10" height="1.200"/><rect x="5.500" y="12" width="10" height="1.200"/></svg>
<i class="abs" style="left:483.2px;top:77.2px;width:60.7px;height:30.4px;background:#e8ebfc;border-radius:4px"></i>
<svg class="abs" style="left:490.5px;top:86px;opacity:.75" width="15" height="14" viewBox="0 0 15 14" fill="#2a33d1"><rect x="2" y="0" width="13" height="1"/><rect x="6" y="2.600" width="9" height="1"/><rect x="6" y="5.200" width="9" height="1"/><rect x="6" y="7.800" width="9" height="1"/><rect x="6" y="10.400" width="9" height="1"/><rect x="0" y="13" width="15" height="1"/><path d="M4 3.500v6L0 6.500z"/></svg>
<svg class="abs" style="left:521px;top:86px" width="15" height="14" viewBox="0 0 15 14" fill="#2a33d1"><rect x="0" y="0" width="15" height="1.400"/><rect x="6" y="2.600" width="9" height="1.200"/><rect x="6" y="5.200" width="9" height="1.200"/><rect x="6" y="7.800" width="9" height="1.200"/><rect x="6" y="10.400" width="9" height="1.200"/><rect x="0" y="12.800" width="15" height="1.200"/><path d="M0 3.500v6l4-3z"/></svg>
<i class="abs" style="left:551.2px;top:77.2px;width:57.4px;height:30.4px;background:#e4e6ee;border-radius:4px"></i>
<i class="abs" style="left:581px;top:77.7px;width:27.2px;height:29.4px;background:#e8ebfc;border-radius:4px"></i>
<div class="abs" style="left:555.8px;top:81px;width:20px;text-align:center;font-weight:bold;font-size:14.500px;line-height:20px;color:#1d1f23">A</div>
<i class="abs" style="left:559px;top:101px;width:14px;height:1px;background:#bfc1c8"></i>
<i class="tri" style="left:590.6px;top:90.3px;border-left-width:4.200px;border-right-width:4.200px;border-top-width:6.500px"></i>
<i class="abs" style="left:615.1px;top:77.2px;width:57.5px;height:30.4px;background:#e4e6ee;border-radius:4px"></i>
<i class="abs" style="left:645px;top:77.7px;width:27.2px;height:29.4px;background:#e8ebfc;border-radius:4px"></i>
<svg class="abs" style="left:625.3px;top:84px" width="11" height="14" viewBox="0 0 11 14" fill="none" stroke="#1d1f23" stroke-width="1"><path d="M5.500.800C7.500 3.800 10.200 6.300 10.200 9a4.700 4.700 0 0 1-9.400 0C.8 6.300 3.500 3.800 5.500.800z"/><path d="M2.800 9.300c.2 1.200.9 1.900 1.900 2.200"/></svg>
<i class="abs" style="left:624px;top:101px;width:14px;height:1px;background:#bfc1c8"></i>
<i class="tri" style="left:654.6px;top:90.3px;border-left-width:4.200px;border-right-width:4.200px;border-top-width:6.500px"></i>
<i class="abs" style="left:21.2px;top:115.2px;width:82.6px;height:30.6px;background:#e8ebfc;border-radius:4px"></i>
<div class="abs" style="left:32.2px;top:120.6px;font-size:13.300px;line-height:20px;color:#3a3fc0;white-space:nowrap">Templates</div>
<div class="abs" style="left:20px;top:155.5px;font-family:'DejaVu Sans',sans-serif;font-size:12px;line-height:20px;color:#777;white-space:nowrap">Your comment</div>

</div>

<!-- CONNECTED -->
<div class="card" id="conn" style="left:1468px;top:518px;width:369px;height:470px">
<div class="ct">Connected people</div>
<div class="chr" style="top:46px;left:11px;right:11px"></div>
<div class="abs" style="left:14px;top:91px;width:331px;height:1px;background:#e6e7f0"></div>
<div class="abs" style="left:14px;top:126px;width:331px;height:1px;background:#e6e7f0"></div>
<div class="abs" style="left:14px;top:161px;width:331px;height:1px;background:#e6e7f0"></div>
<div class="abs" style="left:14px;top:196px;width:331px;height:1px;background:#e6e7f0"></div>
<div class="abs" style="left:14px;top:231px;width:331px;height:1px;background:#e6e7f0"></div>
<div class="abs" style="left:14px;top:266px;width:331px;height:1px;background:#e6e7f0"></div>
<div class="abs" style="left:14px;top:301px;width:331px;height:1px;background:#e6e7f0"></div>
<div class="abs" style="left:14px;top:355px;width:331px;height:1px;background:#e6e7f0"></div>
<i class="hexv" style="left:29.5px;top:63.8px"></i><svg class="abs" style="left:30.0px;top:65.3px" width="18" height="18" viewBox="0 0 18 18" fill="none" stroke="#3d4046" stroke-width="1.15" stroke-linecap="round" stroke-linejoin="round"><circle cx="9" cy="5.800" r="3.600"/><path d="M9 10.500c-3.800 0-6 2-6 3.800 0 1.700 2.700 2.400 6 2.400s6-.7 6-2.400c0-1.800-2.200-3.800-6-3.800z"/></svg>
<div class="lbl" style="left:73.8px;top:64.3px">Reporter</div>
<div class="val" style="right:44px;top:64.3px">Administrator Oxari</div>
<svg class="abs" style="left:30.0px;top:100.2px" width="18" height="18" viewBox="0 0 18 18" fill="none" stroke="#3d4046" stroke-width="1.15" stroke-linecap="round" stroke-linejoin="round"><circle cx="9" cy="9" r="3"/><path d="M12 6v4.200a1.900 1.900 0 0 0 3.800 0V9A6.800 6.800 0 1 0 12.500 14.900"/></svg>
<div class="lbl" style="left:73.8px;top:99.2px">E-mail</div>
<div class="val" style="right:44px;top:99.2px">-</div>
<i class="hexv" style="left:29.5px;top:133.7px"></i><svg class="abs" style="left:30.0px;top:135.2px" width="18" height="18" viewBox="0 0 18 18" fill="none" stroke="#3d4046" stroke-width="1.15" stroke-linecap="round" stroke-linejoin="round"><path d="M4.500 3.200l2-1 2.200 3.800-1.600 1.200c.9 2 2.300 3.400 4.300 4.400l1.300-1.600 3.700 2.300-1 2c-.5.900-1.600 1-2.600.700C7.800 13.300 4.600 9.800 3.600 5.600c-.2-1 .1-1.900.9-2.400z"/><path d="M8 1.800a7.500 7.500 0 0 1 8.300 8.400"/><circle cx="12.300" cy="5.800" r=".5" fill="#3d4046"/></svg>
<div class="lbl" style="left:73.8px;top:134.2px">Telefon</div>
<svg class="abs" style="left:26.9px;top:168.1px" width="13" height="15" viewBox="0 0 13 15" ><path d="M3 .5h7v1.600L8.800 3v3.300c1.600.7 2.600 1.900 2.600 3.400H7.300v3.800L6.500 15l-.8-1.500V9.700H1.600c0-1.500 1-2.700 2.600-3.400V3L3 2.100z" fill="#1d1f23"/></svg>
<div class="lbl" style="left:73.8px;top:169.1px">Adres</div>
<div class="val" style="right:44px;top:169.1px">,</div>
<svg class="abs" style="left:26.9px;top:203.0px" width="13" height="15" viewBox="0 0 13 15" ><path d="M3 .5h7v1.600L8.800 3v3.300c1.600.7 2.600 1.900 2.600 3.400H7.300v3.800L6.500 15l-.8-1.500V9.700H1.600c0-1.500 1-2.700 2.600-3.400V3L3 2.100z" fill="#1d1f23"/></svg>
<div class="lbl" style="left:73.8px;top:204.0px">Adres</div>
<div class="val" style="right:44px;top:204.0px">-</div>
<div class="abs" style="left:28px;top:235.4px;font-weight:bold;font-size:14px;line-height:20px;color:#1d1f23">@</div>
<div class="lbl" style="left:73.8px;top:238.9px">Ticket</div>
<div class="val" style="right:44px;top:238.9px">Portal</div>
<i class="hexv" style="left:29.5px;top:273.8px"></i><svg class="abs" style="left:30.0px;top:275.3px" width="18" height="18" viewBox="0 0 18 18" fill="none" stroke="#3d4046" stroke-width="1.15" stroke-linecap="round" stroke-linejoin="round"><circle cx="9" cy="5.800" r="3.600"/><path d="M9 10.500c-3.800 0-6 2-6 3.800 0 1.700 2.700 2.400 6 2.400s6-.7 6-2.400c0-1.800-2.200-3.800-6-3.800z"/></svg>
<div class="lbl" style="left:73.8px;top:274.3px">Author</div>
<div class="val" style="right:44px;top:274.3px">Administrator Oxari</div>
<i class="hexv" style="left:29.5px;top:308.6px"></i><svg class="abs" style="left:30.0px;top:310.1px" width="18" height="18" viewBox="0 0 18 18" fill="none" stroke="#3d4046" stroke-width="1.15" stroke-linecap="round" stroke-linejoin="round"><circle cx="9" cy="5.800" r="3.600"/><path d="M9 10.500c-3.800 0-6 2-6 3.800 0 1.700 2.700 2.400 6 2.400s6-.7 6-2.400c0-1.800-2.200-3.800-6-3.800z"/></svg>
<div class="lbl" style="left:73.8px;top:309.1px">Author<br>agent</div>
<div class="val" style="right:44px;top:309.1px;font-family:'DejaVu Sans',sans-serif;font-size:10.800px;margin-top:1px">10.0.11.2</div>
<i class="hexv" style="left:29.5px;top:362.7px"></i><svg class="abs" style="left:30.0px;top:364.2px" width="18" height="18" viewBox="0 0 18 18" fill="none" stroke="#3d4046" stroke-width="1.15" stroke-linecap="round" stroke-linejoin="round"><circle cx="9" cy="5.200" r="2.800"/><path d="M9 9.200c-2.800 0-4.500 1.500-4.500 3 0 1.300 2 1.800 4.500 1.800s4.500-.5 4.500-1.800c0-1.500-1.700-3-4.500-3z"/><circle cx="3.200" cy="6.800" r="1.600"/><circle cx="14.800" cy="6.800" r="1.600"/><path d="M4 9.800c-2 0-3.300 1-3.300 2 0 .8 1 1.200 2.500 1.300M14 9.800c2 0 3.300 1 3.300 2 0 .8-1 1.200-2.500 1.300"/></svg>
<div class="lbl" style="left:73.8px;top:363.2px">Assignee<br>persons</div>
<div class="abs" style="left:163.5px;top:429.6px;font-size:12.700px;line-height:20px;font-weight:bold;color:#555">No data</div>
<i class="abs" style="left:360.2px;top:72px;width:5.500px;height:365px;border-radius:3px;background:#c4c4c6"></i>
<i class="trig" style="left:360.0px;top:63px;border-width:0 3px 3.500px 3px;border-style:solid;border-color:transparent transparent #c9c9cc transparent"></i>

</div>

<!-- OVERLAY (arrow + highlight) -->
<div class="abs" style="left:1494px;top:167px;width:268px;height:49px;border:4px solid #8fd24a;border-radius:8px;box-shadow:0 1px 4px rgba(0,0,0,.35),inset 0 1px 6px rgba(0,0,0,.42)"></div>
<svg class="abs" style="left:0;top:0;filter:drop-shadow(0 1px 2px rgba(0,0,0,.35))" width="1872" height="300" viewBox="0 0 1872 300"><path d="M1722.600 82.500L1773 157.500 1777.700 154 1780.700 182.500 1757 165.700 1765 162.800z" fill="#8fd24a" stroke="#8fd24a" stroke-width="1" stroke-linejoin="round"/></svg>


<!-- SCROLLBAR -->
<div class="abs" style="left:1857px;top:0;width:15px;height:966px;background:#fcfcfc;box-shadow:-1px 0 0 #f4f4fa"></div>
<div class="abs" style="left:1860px;top:23px;width:9px;height:493px;background:#8b8b8b;border-radius:4.500px"></div>
<i class="abs" style="left:1860px;top:10px;width:0;height:0;border-left:4.600px solid transparent;border-right:4.600px solid transparent;border-bottom:5.200px solid #8b8b8b"></i>
<i class="abs" style="left:1860px;top:951px;width:0;height:0;border-left:4.600px solid transparent;border-right:4.600px solid transparent;border-top:5.200px solid #8b8b8b"></i>
<div class="corner" style="right:0;top:0;background:#3a3a3c"><i style="right:0;top:0;background:#fcfcfc"></i></div>
<div class="corner" style="right:0;bottom:0;background:#3a3a3c"><i style="right:0;bottom:0;background:#fcfcfc"></i></div>
</body>
</html>
